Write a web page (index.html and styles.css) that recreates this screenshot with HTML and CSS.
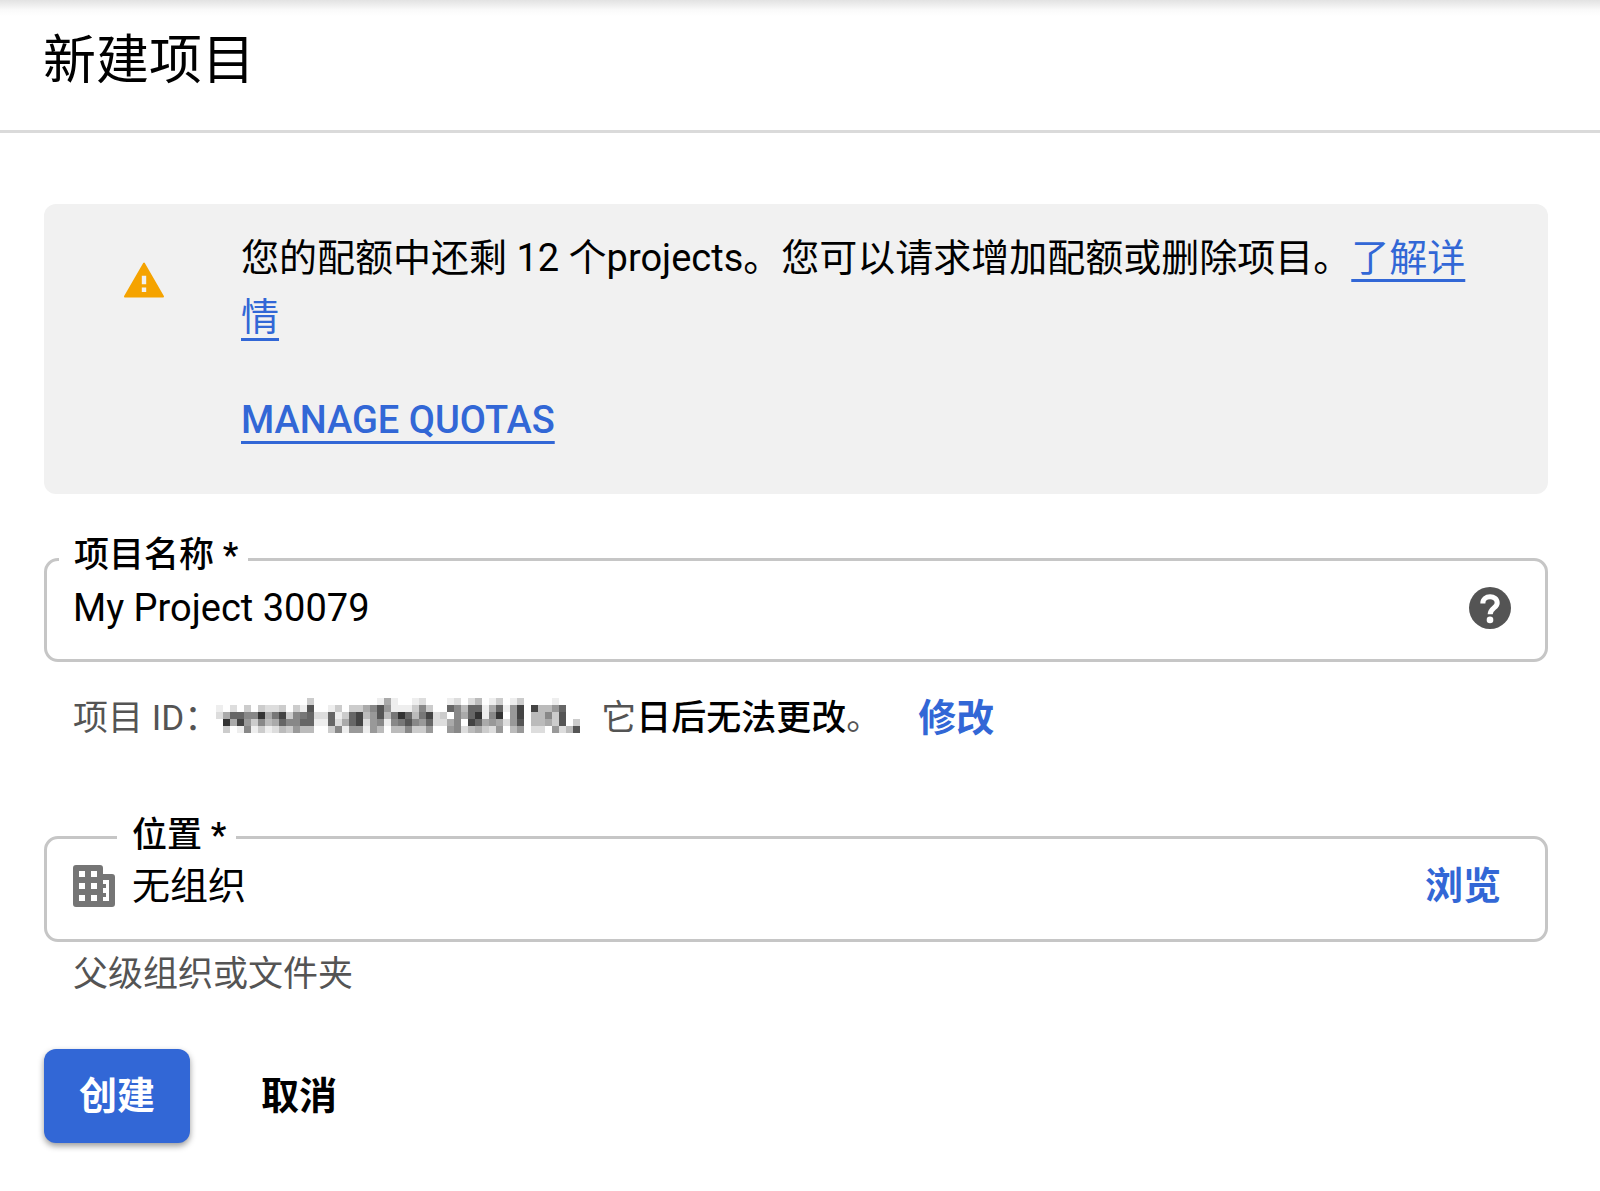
FILE: index.html
```html
<!DOCTYPE html>
<html lang="zh-CN">
<head>
<meta charset="utf-8">
<meta name="viewport" content="width=device-width, initial-scale=1">
<title>新建项目</title>
<link rel="stylesheet" href="styles.css">
</head>
<body>
<header class="header">
  <h1 class="title">新建项目</h1>
</header>
<main class="content">
  <section class="notice">
    <svg class="notice-icon" viewBox="0 0 24 24" aria-hidden="true"><path fill="#f5a300" stroke="#f5a300" stroke-width="1" stroke-linejoin="round" d="M1.6 20.5h20.8L12 2.5z"/><path fill="#f1f1f1" d="M10.8 9.2h2.4v4.6h-2.4zM10.8 15.6h2.4V18h-2.4z"/></svg>
    <div class="notice-body">
      <p class="notice-text">您的配额中还剩 12 个projects。您可以请求增加配额或删除项目。<a class="link" href="#learn">了解详情</a></p>
      <p class="notice-text"><a class="link link-strong" href="#quotas">MANAGE QUOTAS</a></p>
    </div>
  </section>

  <form class="form">
    <fieldset class="field">
      <legend class="legend"><label for="name">项目名称 *</label></legend>
      <div class="row">
        <input class="input" id="name" type="text" value="My Project 30079">
        <button class="icon-button" type="button" aria-label="帮助"><svg class="icon" viewBox="0 0 24 24" aria-hidden="true"><circle cx="12" cy="12" r="12" fill="#545454"/><path fill="none" stroke="#fff" stroke-width="2.9" d="M7.9 9.4C7.9 4.4 16.1 4.4 16.1 9.1c0 2.8-4 3-4 6.5"/><circle cx="12" cy="18.8" r="1.9" fill="#fff"/></svg></button>
      </div>
    </fieldset>

    <div class="project-id">
      <p class="id-text">项目 ID：</p>
      <svg class="mosaic" id="mosaic" viewBox="0 0 53 6" role="img" aria-label="已隐藏" shape-rendering="crispEdges"></svg>
      <p class="id-text">它<strong class="strong">日后无法更改</strong>。</p>
      <button class="text-button edit" type="button">修改</button>
    </div>

    <fieldset class="field location">
      <legend class="legend"><label for="location">位置 *</label></legend>
      <div class="row">
        <svg class="icon" viewBox="0 0 42 42" aria-hidden="true"><path fill="#757575" fill-rule="evenodd" d="M3 0h24a3 3 0 0 1 3 3v6h9a3 3 0 0 1 3 3v27a3 3 0 0 1-3 3H3a3 3 0 0 1-3-3V3a3 3 0 0 1 3-3zM6 6v6h6V6zM18 6v6h6V6zM6 18v6h6v-6zM18 18v6h6v-6zM6 30v6h6v-6zM18 30v6h6v-6zM30 15v4h3v4h-3v5h3v4h-3v4h6V15z"/></svg>
        <input class="input" id="location" type="text" value="无组织" readonly>
        <button class="text-button" type="button">浏览</button>
      </div>
    </fieldset>
    <p class="hint">父级组织或文件夹</p>

    <div class="actions">
      <button class="button primary" type="submit">创建</button>
      <button class="button" type="button">取消</button>
    </div>
  </form>
</main>
<script src="mosaic.js"></script>
</body>
</html>
```
FILE: styles.css
```css
* {
  box-sizing: border-box;
}

body {
  margin: 0;
  background: #fff;
  color: #000;
  font-family: Roboto, "Noto Sans CJK SC", sans-serif;
  font-size: 38px;
  line-height: 59px;
}

h1,
p {
  margin: 0;
}

button,
input {
  font: inherit;
  color: inherit;
  padding: 0;
  border: 0;
  background: none;
}

.header {
  padding: 27px 43px 35px;
  border-bottom: 3px solid #dadada;
  background: linear-gradient(#e2e2e2, #fafafa 10px, #fff 16px) no-repeat;
}

.title {
  font-size: 53px;
  line-height: 68px;
  font-weight: 400;
}

.content {
  padding: 71px 52px 48px 44px;
}

.notice {
  display: flex;
  align-items: flex-start;
  gap: 75px;
  padding: 25px 72px 44px 78px;
  border-radius: 12px;
  background: #f1f1f1;
}

.notice-icon {
  flex: none;
  width: 44px;
  height: 44px;
  margin-top: 30px;
}

.notice-body {
  display: grid;
  gap: 44px;
}

.link {
  color: #3267d6;
  text-decoration: underline;
  text-decoration-thickness: 3px;
  text-underline-offset: 8px;
  text-decoration-skip-ink: none;
}

.link-strong {
  font-weight: 500;
}

.form {
  padding-top: 46px;
}

.field {
  min-width: 0;
  margin: 0;
  padding: 0 34px 21px 26px;
  border: 3px solid #c6c6c6;
  border-radius: 14px;
}

.legend {
  margin-left: -14px;
  padding: 0 10px 6px 15px;
  font-size: 35px;
  line-height: 32px;
  font-weight: 500;
}

.row {
  display: flex;
  align-items: center;
  gap: 17px;
  height: 60px;
}

.input {
  flex: 1;
  min-width: 0;
  height: 58px;
  outline: 0;
}

.icon {
  display: block;
  flex: none;
  width: 42px;
  height: 42px;
}

.text-button {
  color: #3267d6;
  font-weight: 700;
}

.project-id {
  display: flex;
  align-items: center;
  padding: 27px 29px 0;
}

.id-text {
  color: #545454;
  font-size: 35px;
}

.strong {
  color: #000;
  font-weight: 500;
}

.mosaic {
  width: 371px;
  height: 42px;
  margin: 0 14px 0 -3px;
}

.edit {
  margin-left: 37px;
}

.location {
  margin-top: 72px;
  padding-right: 44px;
}

.location .legend {
  margin-left: 44px;
  padding-bottom: 2px;
}

.location .row {
  height: 64px;
}

.hint {
  padding: 3px 29px 0;
  color: #545454;
  font-size: 35px;
}

.actions {
  display: flex;
  gap: 36px;
  padding-top: 45px;
}

.button {
  height: 94px;
  padding: 0 35px;
  border-radius: 12px;
  font-weight: 700;
}

.primary {
  background: #3267d6;
  color: #fff;
  box-shadow: 0 3px 6px rgba(0, 0, 0, 0.4);
}
```
FILE: mosaic.js
```js
// Each hex digit is the grey level of one tile of the masked project ID.
const rows = [
  'FFFFFFFFFFFFFCFFFFFFFFFEAEFFEDFFFEDFDBFECFECFFFFEFFFF',
  'EFDFCFCDDCFCE5FFECFCCA859EEEC8CFF68B66EA6E94F4BB96FFF',
  'DA66883A74C876DD6EC64B95B736B74DCF8A63E83F94FBB8C5FFF',
  'F3A49C8BA68866EE6DA64D98E875896DDA8F46A9AD95FBBAC5FCF',
  'FCFE8ECEDBC9BBFFC8E99E9BFBB8CC9FF98DBACD9FB9FDDF9DB5F',
];

document.getElementById('mosaic').innerHTML = rows
  .map((row, y) => [...row]
    .map((level, x) => `<rect x="${x}" y="${y}" width="1" height="1" fill="#${level.repeat(3)}"/>`)
    .join(''))
  .join('');
```
